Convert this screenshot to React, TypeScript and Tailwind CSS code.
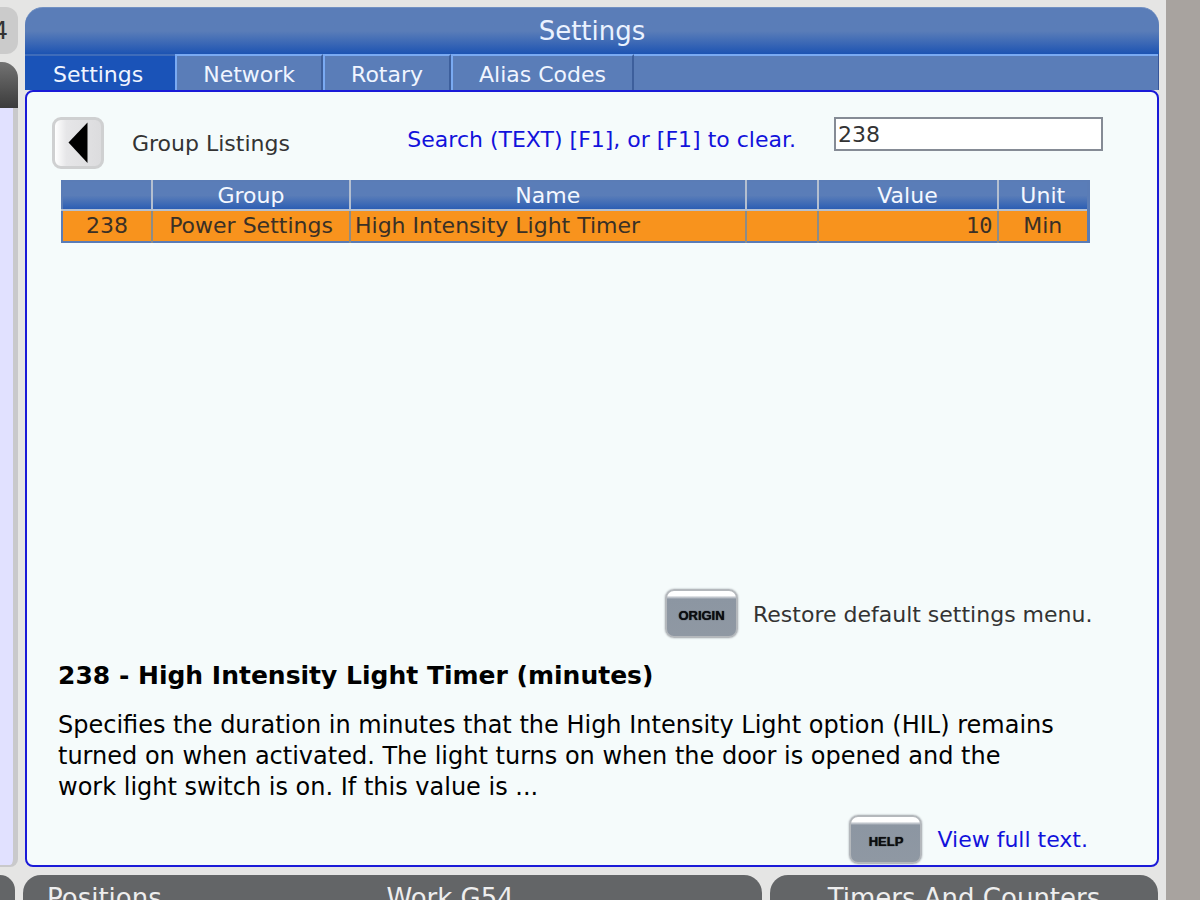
import React, { useState } from 'react';
import clsx from 'clsx';

interface Setting {
  id: number;
  group: string;
  name: string;
  value: number;
  unit: string;
}

const tabs = ['Settings', 'Network', 'Rotary', 'Alias Codes'];

const settings: Setting[] = [
  { id: 238, group: 'Power Settings', name: 'High Intensity Light Timer', value: 10, unit: 'Min' },
];

const KeyButton: React.FC<{ label: string; id: string }> = ({ label, id }) => (
  <button
    id={id}
    className="flex h-[49px] w-[73px] shrink-0 items-center justify-center rounded-[9px] border-2 border-[#b4b8bc] bg-linear-to-b from-white from-10% via-[#8c96a2] via-18% to-[#8f98a3] pt-1 font-['Liberation_Sans',sans-serif] text-[13px] font-bold text-[#0c0d10] shadow-[0_0_2px_#9a9fa5] [text-shadow:0_0_1px_#0c0d10]"
  >
    {label}
  </button>
);

const SettingsTable: React.FC = () => (
  <table className="w-full table-fixed border-collapse border-2 border-r-3 border-[#5a7cb6] text-[22px] leading-[30px]">
    <colgroup>
      <col className="w-[90px]" />
      <col className="w-[198px]" />
      <col />
      <col className="w-[72px]" />
      <col className="w-[180px]" />
      <col className="w-[91px]" />
    </colgroup>
    <thead>
      <tr className="h-[29px] bg-linear-to-b from-[#5a7db8] from-50% to-[#285bb3] text-[#f4f8ff]">
        {['', 'Group', 'Name', '', 'Value', 'Unit'].map((title, i) => (
          <th
            key={i}
            className="border-r-2 border-b-2 border-[#b4bfd0] p-0 leading-[27px] font-normal last:border-r-3 last:border-r-[#5a7cb6]"
          >
            {title}
          </th>
        ))}
      </tr>
    </thead>
    <tbody>
      {settings.map((s) => (
        <tr key={s.id} className="h-8 bg-[#f8931d] text-center text-[#3a3026]">
          <td className="border-r-2 border-[#8c8c88] p-0">{s.id}</td>
          <td className="border-r-2 border-[#8c8c88] p-0 whitespace-nowrap">{s.group}</td>
          <td className="border-r-2 border-[#8c8c88] p-0 pl-1 text-left whitespace-nowrap">{s.name}</td>
          <td className="border-r-2 border-[#8c8c88] p-0"></td>
          <td className="border-r-2 border-[#8c8c88] p-0 pr-1 text-right font-['DejaVu_Sans_Mono',monospace]">
            {s.value}
          </td>
          <td className="p-0">{s.unit}</td>
        </tr>
      ))}
    </tbody>
  </table>
);

const App: React.FC = () => {
  const [activeTab, setActiveTab] = useState('Settings');
  const [search, setSearch] = useState('238');

  return (
    <div className="flex h-screen min-h-[900px] overflow-hidden bg-[#e5e5e4] font-['DejaVu_Sans',sans-serif] text-[22px] text-[#333333]">
      <div className="flex min-w-0 flex-1 flex-col gap-2 pt-[7px]">
        <div className="flex h-[860px] shrink-0 gap-[7px] pr-[7px]">
          {/* Edge of the neighbouring program pane */}
          <aside className="flex w-[18px] shrink-0 flex-col">
            <div className="flex h-[47px] items-center justify-end overflow-hidden rounded-r-xl bg-[#cbcbcb] pr-[10px] text-2xl">
              4
            </div>
            <div className="mt-2 h-[46px] rounded-tr-2xl bg-linear-to-b from-[#737373] to-[#3c3c3c]"></div>
            <div className="flex-1 rounded-br-lg border-r-5 border-b-2 border-[#c9c9cb] bg-[#e1e1ff]"></div>
          </aside>

          {/* Settings window */}
          <main className="flex min-w-0 flex-1 flex-col">
            <h1 className="h-[47px] rounded-t-[18px] border-t border-[#7190c2] bg-linear-to-b from-[#5a7db8] from-50% to-[#1c53b2] text-center text-[26px] leading-[46px] text-[#eaf2ff]">
              Settings
            </h1>
            <nav className="flex h-9 border-r border-[#37569a] bg-[#5a7db8]">
              {tabs.map((tab) => (
                <button
                  key={tab}
                  onClick={() => setActiveTab(tab)}
                  className={clsx(
                    'border-t-2 pt-1 leading-7 text-[#f0f5ff]',
                    activeTab === tab
                      ? 'border-t-[#3f6cba] bg-[#1a53b8] pr-8 pl-7'
                      : 'border-r-2 border-l-2 border-t-[#7aaaf2] border-r-[#3d5f9c] border-l-[#7aaaf2] px-[26px]'
                  )}
                >
                  {tab}
                </button>
              ))}
              <div className="flex-1 border-t-2 border-[#7aaaf2]"></div>
            </nav>

            <section className="flex flex-1 flex-col rounded-lg border-2 border-[#1a1ad8] bg-[#f5fbfb]">
              <div className="flex h-[88px] items-start pt-[25px] pr-[54px] pl-[25px]">
                <button
                  aria-label="Back to group listings"
                  className="flex size-[52px] shrink-0 items-center justify-center rounded-[9px] border-3 border-[#cfd0d1] bg-linear-to-r from-white via-[#e6e6e8] via-25% to-[#dcdcde]"
                >
                  <svg width="20" height="42" viewBox="0 0 20 42" aria-hidden="true">
                    <path d="M19.500 0.500V41L0.500 20.500Z" fill="#000" />
                  </svg>
                </button>
                <span className="ml-7 leading-[54px] whitespace-nowrap">Group Listings</span>
                <label htmlFor="search" className="ml-auto pr-1 leading-[46px] whitespace-nowrap text-[#1212dc]">
                  Search (TEXT) [F1], or [F1] to clear.
                </label>
                <input
                  id="search"
                  type="text"
                  value={search}
                  onChange={(e) => setSearch(e.target.value)}
                  className="ml-[34px] h-[34px] w-[269px] border-2 border-[#858b95] bg-white pl-0.5 outline-none"
                />
              </div>

              <div className="pr-[67px] pl-[34px]">
                <SettingsTable />
              </div>

              <div className="mt-auto flex items-center justify-end gap-[15px] pr-[54px]">
                <KeyButton id="origin" label="ORIGIN" />
                <label htmlFor="origin" className="w-[350px] pt-0.5 whitespace-nowrap">
                  Restore default settings menu.
                </label>
              </div>

              <div className="mt-5 pr-24 pl-[31px] text-black">
                <h2 className="text-[25px] leading-9 font-bold">238 - High Intensity Light Timer (minutes)</h2>
                <p className="mt-4 text-2xl leading-[31px]">
                  Specifies the duration in minutes that the High Intensity Light option (HIL) remains turned on when
                  activated. The light turns on when the door is opened and the work light switch is on. If this value
                  is ...
                </p>
              </div>

              <div className="mt-3 mb-px flex items-center justify-end gap-[15px] pr-[69px] text-[#1212dc]">
                <KeyButton id="help" label="HELP" />
                <label htmlFor="help">View full text.</label>
              </div>
            </section>
          </main>
        </div>

        {/* Headers of the panes below */}
        <footer className="flex h-[60px] shrink-0 gap-2 pr-2 text-[26px] leading-[46px] text-[#eeeeee]">
          <div className="w-[15px] shrink-0 rounded-tr-2xl bg-[#636567]"></div>
          <div className="flex min-w-0 flex-1 rounded-t-[18px] bg-[#636567] pr-9 pl-6">
            <span className="flex-1">Positions</span>
            <span className="flex-1 whitespace-nowrap">Work G54</span>
          </div>
          <div className="w-[388px] shrink-0 rounded-t-[18px] bg-[#636567] text-center">Timers And Counters</div>
        </footer>
      </div>
      <div className="w-[34px] shrink-0 bg-[#a8a39f]"></div>
    </div>
  );
};

export default App;
